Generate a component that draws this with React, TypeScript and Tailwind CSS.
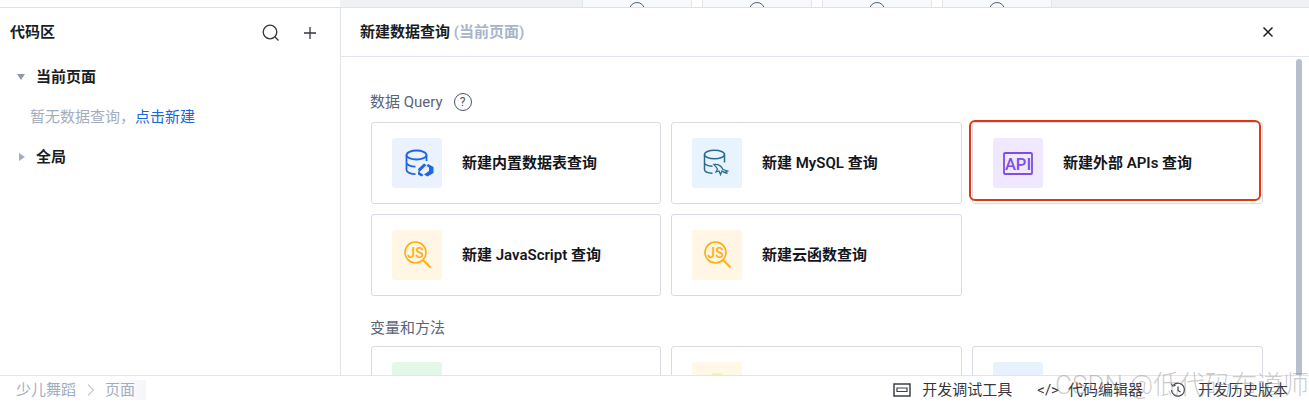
import React from "react";

const font = { fontFamily: 'Roboto,"Noto Sans CJK SC",sans-serif' };

function DbIcon() {
  return (
    <svg className="ml-1" width="29" height="28" viewBox="0 0 29 28" fill="none" stroke="#1e66e6" strokeWidth="1.800">
      <ellipse cx="11.500" cy="6" rx="10" ry="4.500" />
      <path d="M1.500 6v15c0 2.200 4 4 9 4.200M21.500 6v6M1.500 13.500c0 2.200 4 4 9 4.200" />
      <path d="M13 20l6-5.500 2.500 1.500-6 6-1.500 1z" fill="#1e66e6" stroke="none" />
      <path d="M23 15l5.500 3v6l-6 3.500-3.500-2 5-3.500v-3.500l-2.500-1.500z" fill="#1e66e6" stroke="none" />
      <path d="M13 22v3.500l3.500 2 2-1.500-3.500-2.500z" fill="#1e66e6" stroke="none" />
    </svg>
  );
}

function MysqlIcon() {
  return (
    <svg width="28" height="28" viewBox="0 0 28 28" fill="none" stroke="#2d6a8f" strokeWidth="1.500">
      <ellipse cx="11.500" cy="5.500" rx="10" ry="4.200" />
      <path d="M1.500 5.500v15c0 2 3 3.500 8 3.800M21.500 5.500v8M1.500 13.500c0 2 3.500 3.500 8 3.800" />
      <path d="M11 15.500c4-.5 7.500 2 9 5l4.500 1.500-2 .8 2 1.700-3.500-1.200-2-1.300-1.500 3.500-1.500-3.500-3 1 1.500-3c-1-1.500-2-3-3.500-4.500z" strokeWidth="1.300" />
    </svg>
  );
}

function ApiIcon() {
  return (
    <svg width="30" height="23" viewBox="0 0 30 23" fill="none">
      <rect x="1" y="1" width="28" height="21" stroke="#7c4de8" strokeWidth="1.800" rx="1" />
      <text x="15" y="17.500" textAnchor="middle" fill="#7c4de8" fontSize="16.500" fontWeight="500" fontFamily="Roboto,sans-serif">API</text>
    </svg>
  );
}

function JsIcon() {
  return (
    <svg className="ml-0.5" width="28" height="28" viewBox="0 0 28 28" fill="none">
      <circle cx="11.500" cy="11.500" r="10.500" stroke="#ffad0d" strokeWidth="1.600" />
      <path d="M19 19l7.500 7.500" stroke="#ffad0d" strokeWidth="1.800" />
      <text x="11.500" y="16.500" textAnchor="middle" fill="#ffad0d" fontSize="14" fontFamily="Roboto,sans-serif" fontWeight="500">JS</text>
    </svg>
  );
}

function QueryCard({ icon, bg, label, active }: { icon: React.ReactNode; bg: string; label: string; active?: boolean }) {
  return (
    <div className="relative flex h-[82px] items-center rounded-[3px] border border-[#d8dae6] pl-5">
      <div className={`flex h-[50px] w-[50px] shrink-0 items-center justify-center rounded-[3px] ${bg}`}>{icon}</div>
      <span className="ml-5 text-[15px] leading-5 font-semibold text-[#14161c]">{label}</span>
      {active && <div className="absolute -top-[3px] -left-[4px] right-[1px] bottom-[2px] rounded-[6px] border-2 border-[#d93a14]" />}
    </div>
  );
}

function TopTab() {
  return (
    <div className="relative h-full w-[110px] overflow-hidden border-x border-[#e4e6ee] bg-[#f8f9fc]">
      <div className="absolute left-[46px] top-[2px] h-4 w-4 rounded-full border border-[#4a5f85]" />
    </div>
  );
}

export default function App() {
  return (
    <div className="relative flex h-[408px] w-[1309px] flex-col overflow-hidden bg-white" style={font}>
      <div className="flex h-2 shrink-0 border-b border-[#dfe1ea]">
        <div className="w-[340px] shrink-0 bg-white" />
        <div className="flex flex-1 bg-[#f0f1f5]">
          <div className="w-[242px] shrink-0" />
          <div className="flex h-full gap-[10px] bg-white">
            <TopTab />
            <TopTab />
            <TopTab />
            <TopTab />
          </div>
        </div>
      </div>

      <div className="flex min-h-0 flex-1">
        <aside className="w-[341px] shrink-0 border-r border-[#e0e2ec]">
          <div className="flex h-[49px] items-center justify-between pr-[23px] pl-[10px]">
            <span className="text-[15px] font-semibold text-[#1b1d24]">代码区</span>
            <div className="flex items-center gap-[23px]">
              <svg width="18" height="18" viewBox="0 0 18 18" fill="none" stroke="#33363f" strokeWidth="1.300">
                <circle cx="8" cy="8" r="6.800" />
                <path d="M13 13l3.500 3.500" />
              </svg>
              <svg width="14" height="14" viewBox="0 0 14 14" fill="none" stroke="#33363f" strokeWidth="1.300">
                <path d="M7 1v12M1 7h12" />
              </svg>
            </div>
          </div>
          <div className="mt-[10px] flex h-5 items-center pl-[17px]">
            <span className="h-0 w-0 border-x-[4px] border-t-[6px] border-x-transparent border-t-[#8f99ad]" />
            <span className="ml-[11px] text-[15px] font-semibold text-[#1b1d24]">当前页面</span>
          </div>
          <div className="mt-[20px] flex h-5 items-center pl-[30px] text-[15px]">
            <span className="text-[#a3adc0]">暂无数据查询，</span>
            <span className="text-[#1a66e0]">点击新建</span>
          </div>
          <div className="mt-[20px] flex h-5 items-center pl-[19px]">
            <span className="h-0 w-0 border-y-[4px] border-l-[6px] border-y-transparent border-l-[#a3adc0]" />
            <span className="ml-[11px] text-[15px] font-semibold text-[#1b1d24]">全局</span>
          </div>
        </aside>

        <main className="flex min-w-0 flex-1 flex-col">
          <div className="flex h-[49px] shrink-0 items-center justify-between border-b border-[#e2e4ee] pr-[36px] pl-[19px]">
            <div className="text-[15px] font-semibold text-[#1b1d24]">
              新建数据查询 <span className="text-[#a9b3c9]">(当前页面)</span>
            </div>
            <svg width="10" height="10" viewBox="0 0 10 10" fill="none" stroke="#1b1d24" strokeWidth="1.500">
              <path d="M.5.500l9 9M9.500.500l-9 9" />
            </svg>
          </div>

          <div className="relative min-h-0 flex-1 overflow-hidden pl-[30px]">
            <div className="absolute top-[2px] right-[7px] h-[320px] w-[6px] rounded-full bg-[#b8bfcc]" />
            <div className="mt-[35px] -ml-px flex h-5 items-center gap-[11px] text-[15px] text-[#5a6478]">
              <span>数据 Query</span>
              <span className="flex h-[18px] w-[18px] items-center justify-center rounded-full border border-[#4a5568] text-[12px] leading-none text-[#4a5568]">?</span>
            </div>
            <div className="mt-[10px] grid grid-cols-[290px_291px_291px] gap-[10px]">
              <QueryCard icon={<DbIcon />} bg="bg-[#ebf2fe]" label="新建内置数据表查询" />
              <QueryCard icon={<MysqlIcon />} bg="bg-[#e7f4fe]" label="新建 MySQL 查询" />
              <QueryCard icon={<ApiIcon />} bg="bg-[#f0e8fe]" label="新建外部 APIs 查询" active />
              <QueryCard icon={<JsIcon />} bg="bg-[#fff6e6]" label="新建 JavaScript 查询" />
              <QueryCard icon={<JsIcon />} bg="bg-[#fff6e6]" label="新建云函数查询" />
            </div>
            <div className="mt-[22px] -ml-px h-5 text-[15px] leading-5 text-[#5a6478]">变量和方法</div>
            <div className="mt-[8px] grid grid-cols-[290px_291px_291px] gap-[10px]">
              <QueryCard icon={null} bg="bg-[#e3f8e9]" label="" />
              <QueryCard icon={<div className="h-7 w-3 rounded-t-[3px] bg-[#fdeeb8]" />} bg="bg-[#fff8e6]" label="" />
              <QueryCard icon={null} bg="bg-[#e8f1fe]" label="" />
            </div>
          </div>
        </main>
      </div>

      <footer className="relative flex h-[33px] shrink-0 items-start justify-between border-t border-[#e2e4ee] bg-white pt-[4px] pr-[21px] pl-4 text-[15px] leading-5">
        <div className="flex items-center text-[#a3adc0]">
          <span>少儿舞蹈</span>
          <svg className="mx-[10px]" width="9" height="12" viewBox="0 0 9 12" fill="none" stroke="#c5ccd9" strokeWidth="1.200">
            <path d="M2 .500l5.500 5.500-5.500 5.500" />
          </svg>
          <span className="bg-gradient-to-r from-white to-[#f5f6fa] pr-[11px]">页面</span>
        </div>
        <div className="flex items-center text-[#33363f]">
          <svg width="18" height="14" viewBox="0 0 18 14" fill="none" stroke="#3c4048" strokeWidth="1.500">
            <rect x="1" y="1" width="16" height="12" />
            <path d="M4 5h10v3.500H4z" strokeWidth="1.200" />
          </svg>
          <span className="ml-[11px]">开发调试工具</span>
          <span className="ml-[25px] whitespace-nowrap">&lt;/&gt;</span>
          <span className="ml-[9px]">代码编辑器</span>
          <svg className="ml-[27px]" width="16" height="16" viewBox="0 0 16 16" fill="none" stroke="#3c4048" strokeWidth="1.200">
            <path d="M3.500 3A6.500 6.500 0 1 1 1.500 8M1 1.500l1.800 2.500 2.700-.5M8 4.500V8.500l2.500 1.500" />
          </svg>
          <span className="ml-[12px]">开发历史版本</span>
        </div>
        <div className="pointer-events-none absolute -top-[7px] right-0 text-[26px] leading-8 font-light whitespace-nowrap text-[#8c8c8c]/45">CSDN @低代码布道师</div>
      </footer>
    </div>
  );
}
